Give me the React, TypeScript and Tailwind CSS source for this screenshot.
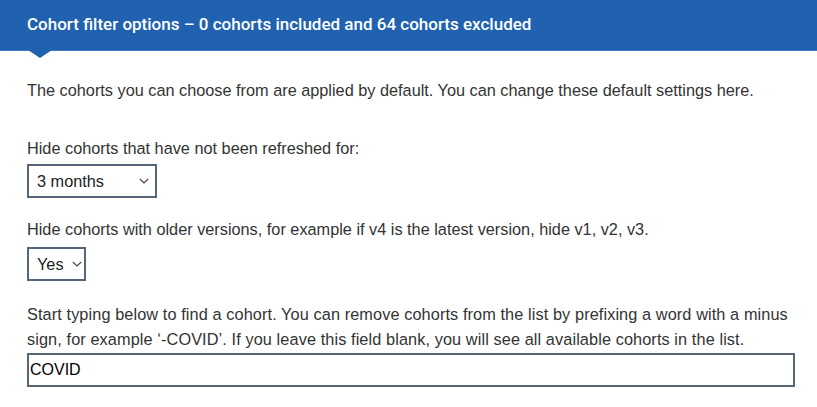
import React, { useState } from "react";

const font = "font-['Liberation_Sans',Arial,sans-serif]";

function Chevron() {
  return (
    <svg width="10" height="6" viewBox="0 0 10 6" className="shrink-0">
      <path d="M0.8 1l4.2 4L9.2 1" fill="none" stroke="#444" strokeWidth="1.1" />
    </svg>
  );
}

function FakeSelect({ value, width }: { value: string; width: string }) {
  return (
    <div
      className={`flex items-center justify-between gap-[8px] h-[34px] ${width} border-2 border-[#566676] bg-white pl-[8px] pr-[6px] text-[16.3px] text-[#222]`}
    >
      <span>{value}</span>
      <Chevron />
    </div>
  );
}

export default function App() {
  const [query, setQuery] = useState("COVID");

  return (
    <div className={`w-[817px] h-[407px] overflow-hidden bg-white text-[#333] ${font}`}>
      {/* header bar */}
      <div className="relative h-[51px] bg-[#2062b0] flex items-center px-[27px] border-b border-[#3d7cc4]">
        <span className="text-white text-[17px] font-medium font-['Roboto',Arial,sans-serif]">
          Cohort filter options – 0 cohorts included and 64 cohorts excluded
        </span>
        <div className="absolute left-[28px] top-[50px] w-0 h-0 border-l-[12px] border-r-[12px] border-t-[8px] border-l-transparent border-r-transparent border-t-[#2062b0]" />
      </div>

      <div className="px-[27px] text-[16.3px] leading-[25px]">
        <p className="mt-[27px]">
          The cohorts you can choose from are applied by default. You can change these default settings here.
        </p>

        <p className="mt-[33px]">Hide cohorts that have not been refreshed for:</p>
        <div className="mt-[3px]">
          <FakeSelect value="3 months" width="w-[130px]" />
        </div>

        <p className="mt-[19px]">
          Hide cohorts with older versions, for example if v4 is the latest version, hide v1, v2, v3.
        </p>
        <div className="mt-[5px]">
          <FakeSelect value="Yes" width="w-[59px]" />
        </div>

        <p className="mt-[21px] tracking-[0.1px]">
          Start typing below to find a cohort. You can remove cohorts from the list by prefixing a word with a minus
          sign, for example ‘-COVID’. If you leave this field blank, you will see all available cohorts in the list.
        </p>
        <input
          value={query}
          onChange={(e) => setQuery(e.target.value)}
          className="mt-[1px] block w-[768px] h-[34px] border-2 border-[#566676] px-[1px] text-[16px] text-black outline-none"
        />
      </div>
    </div>
  );
}
